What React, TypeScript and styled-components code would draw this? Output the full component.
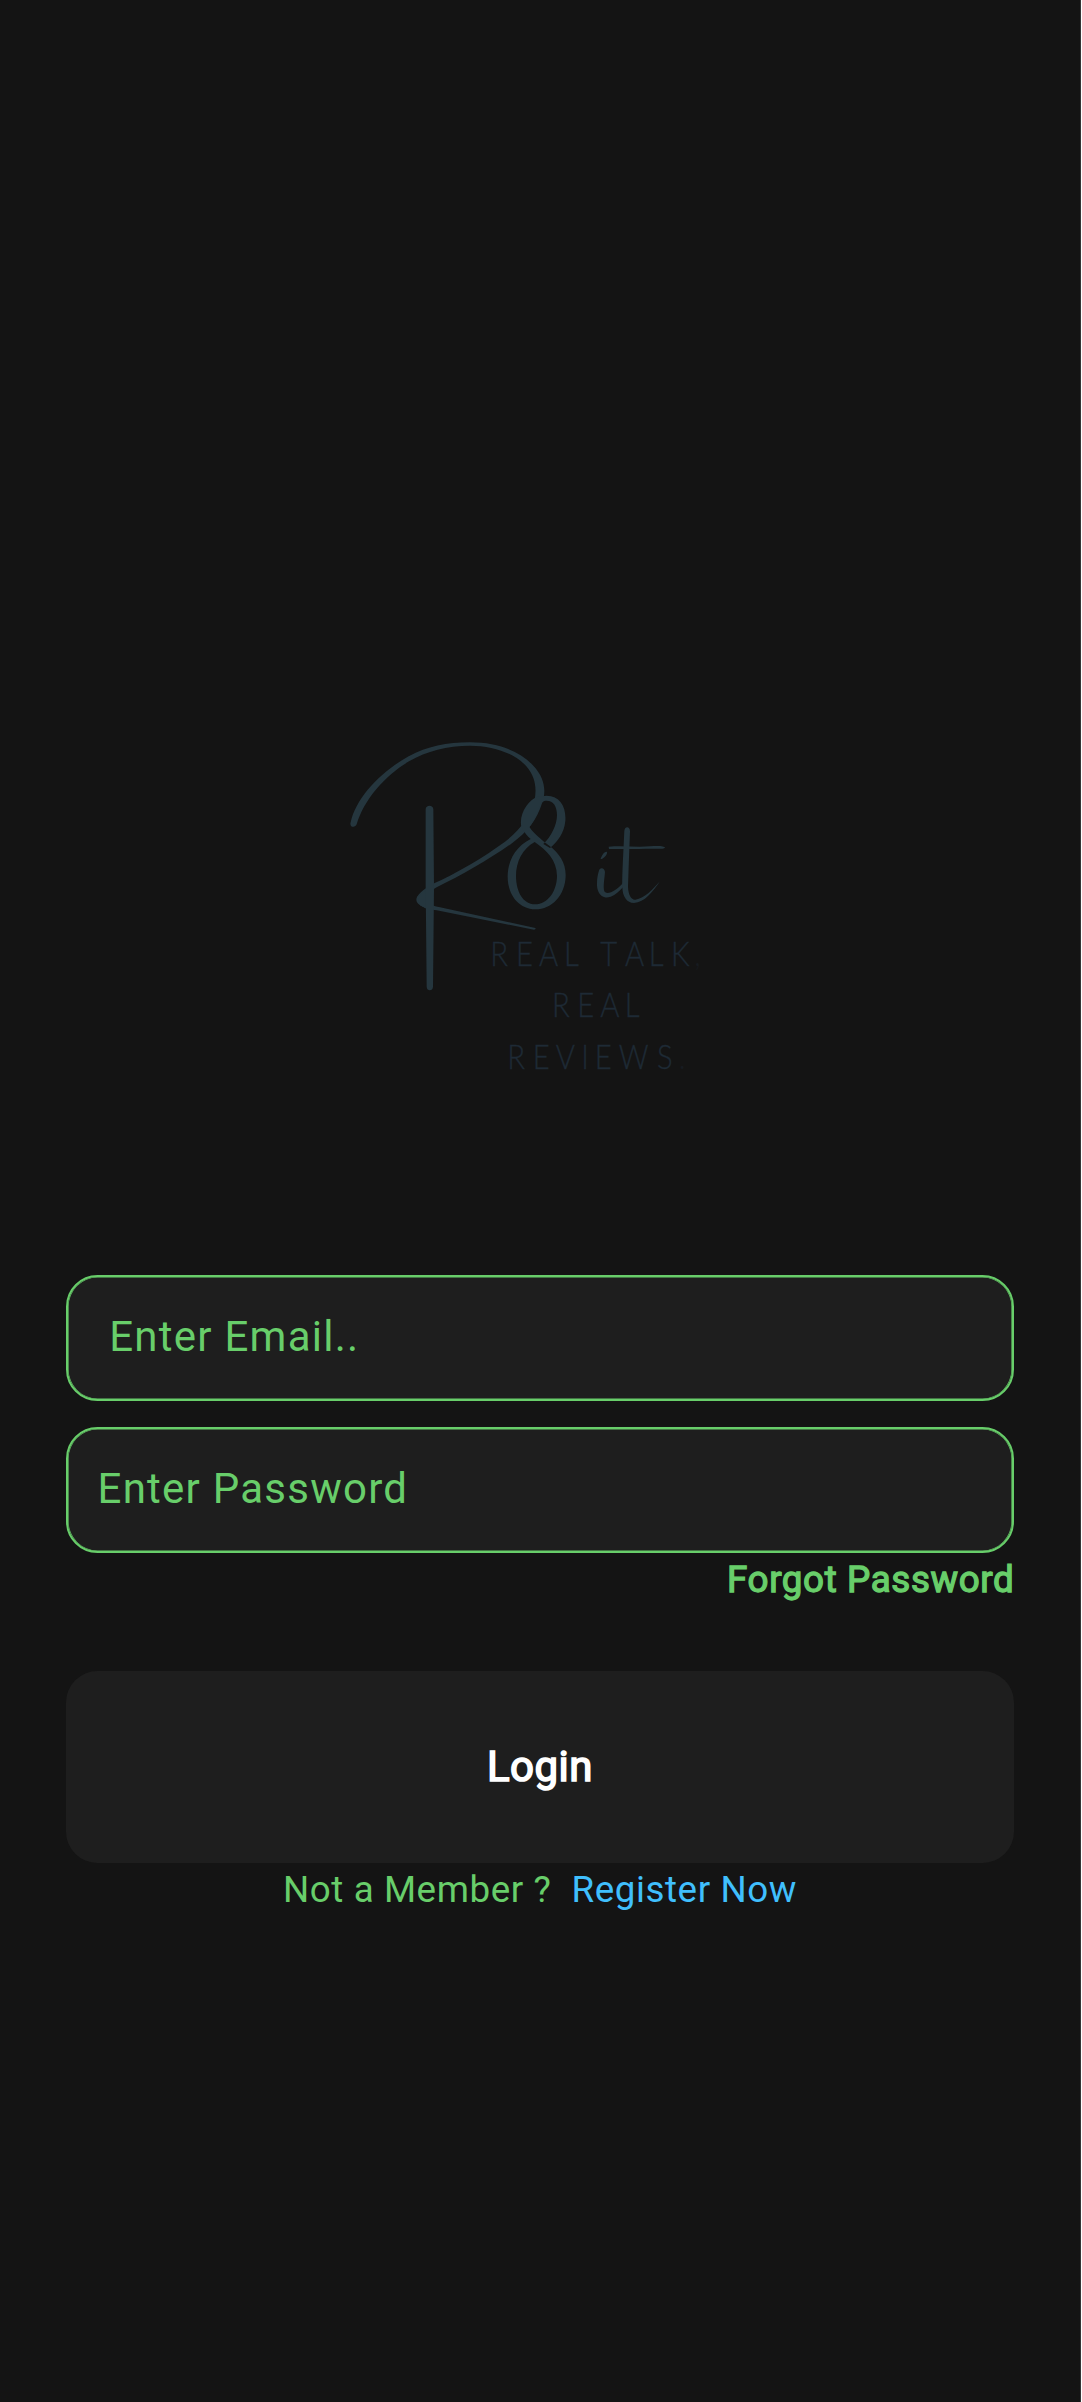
import React from "react";
import styled, { createGlobalStyle } from "styled-components";

const dp = (n: number) => `${n * 2.625}px`;

const colors = {
  page: "#141414",
  surface: "#1e1e1e",
  green: "#68ce6a",
  blue: "#40bffd",
  ink: "#25363e",
  tagline: "#1e2a35",
  faint: "#171b20",
};

const GlobalStyle = createGlobalStyle`
  * { box-sizing: border-box; }
  body { margin: 0; background: #fff; }
`;

const Screen = styled.main`
  display: flex;
  flex-direction: column;
  align-items: stretch;
  width: 1081px;
  height: 2402px;
  padding: 720px ${dp(25)} 0;
  border-right: 1px solid #343536;
  background: ${colors.page};
  font-family: Roboto, "Noto Sans", sans-serif;
  color: ${colors.green};
`;

const Logo = styled.svg`
  display: block;
  flex: none;
  width: 380px;
  height: 370px;
  margin: 0 0 184.5px 264.375px;
`;

const Tagline = styled.text`
  font-family: Lato, sans-serif;
  font-weight: 300;
  font-size: 101px;
  fill: ${colors.tagline};
  stroke: ${colors.tagline};
  stroke-width: 1px;
`;

const Mark = styled.tspan`
  fill: ${colors.faint};
  stroke: none;
`;

const Field = styled.input<{ $indent: number }>`
  display: block;
  flex: none;
  width: 100%;
  height: ${dp(48)};
  margin: 0 0 26.2px;
  padding: 0 28.9px 2px ${(p) => p.$indent}px;
  border: 2px solid ${colors.green};
  border-radius: ${dp(12)};
  outline: none;
  background: ${colors.surface};
  box-shadow: inset 0 0 0 0.6px ${colors.green};
  color: ${colors.green};
  font: 400 ${dp(16)} Roboto, sans-serif;
  letter-spacing: 1.25px;
  &::placeholder {
    color: ${colors.green};
    opacity: 1;
  }
`;

const Forgot = styled.a`
  align-self: flex-end;
  height: 53px;
  margin-top: -26.2px;
  line-height: 53px;
  font-size: ${dp(14)};
  letter-spacing: 0.62px;
  -webkit-text-stroke: 1.3px ${colors.green};
`;

const LoginButton = styled.button`
  flex: none;
  height: 192px;
  margin: 65px 0 0;
  padding: 0;
  border: 0;
  border-radius: ${dp(12)};
  background: ${colors.surface};
  color: #fff;
  font: 400 ${dp(16)} Roboto, sans-serif;
  letter-spacing: 0.5px;
  -webkit-text-stroke: 1.6px #fff;
`;

const SignupRow = styled.p`
  display: flex;
  justify-content: center;
  gap: 20px;
  margin: 0.6px 0 0;
  line-height: 53px;
  font-size: ${dp(14)};
  letter-spacing: 0.58px;
`;

const RegisterLink = styled.a`
  color: ${colors.blue};
`;

const CONDENSE = 0.87;

/* Letters are condensed and each one starts at its own tracked position. */
function TaglineLine({ y, text, mark, at }: { y: number; text: string; mark?: string; at: number[] }) {
  const xs = at.map((x) => (x / CONDENSE).toFixed(1));
  return (
    <Tagline y={y} transform={`scale(${CONDENSE} 1)`} x={xs.join(" ")}>
      {text}
      {mark && <Mark>{mark}</Mark>}
    </Tagline>
  );
}

function LogoMark() {
  return (
    <Logo viewBox="0 0 1140 1110" role="img" aria-label="R8 it">
      <g fill={colors.ink}>
        <path d="M62 307C78 233 152 155 236 109C292 79 350 67 420 67C505 67 570 95 610 137C644 173 650 214 636 250C620 300 595 334 544 371C480 417 395 466 320 502C302 512 291 524 292 539C294 552 309 557 330 562L616 624Q619 629 612 629L320 571C286 567 259 554 259 540C259 526 280 509 306 493C381 459 461 412 525 365C570 331 603 286 614 239C620 205 617 172 589 139C553 99 489 77 420 77C351 77 291 93 237 124C168 164 102 238 80 313C76 325 57 322 62 307Z" />
        <path d="M262 530L296 502L300 572L270 556Z" />
        <path d="M287 268C287 254 310 254 310 268L312 500L309 800C309 814 290 814 290 800L287 500Z" />
        <path
          fillRule="evenodd"
          d="M650 227C690 228 709 260 706 303C703 337 683 366 660 384L640 372C664 350 681 314 681 286C681 258 670 242 650 242C640 242 633 247 629 260C618 290 605 315 598 320C610 340 632 356 656 376C689 401 708 430 707 468C705 525 667 568 616 568C564 567 532 522 533 467C534 420 558 379 602 357C592 348 583 338 574 320C566 280 596 240 622 230ZM614 366C577 386 558 426 558 468C558 514 579 553 615 553C654 553 681 512 681 467C680 420 650 391 614 366Z"
        />
        <path d="M813 413C817 402 824 394 830 395C835 399 825 411 817 416C812 418 811 416 813 413Z" />
        <path d="M836 380C880 377 920 382 960 379C984 377 1004 378 1005 383C1003 388 970 386 946 386C910 388 875 386 837 387Z" />
        <path d="M806 455C808 440 824 442 825 456C823 480 819 500 823 514C832 528 860 510 880 488L882 498C862 522 840 536 824 532C808 528 800 510 801 490C801 476 803 465 806 455Z" />
        <path d="M883 332C885 317 900 319 900 334L896 440L894 500C895 525 904 540 916 539C945 535 968 508 990 484C968 515 944 548 912 549C890 549 878 530 877 502C876 470 880 400 883 332Z" />
      </g>
      <TaglineLine y={737} text="REAL TALK" mark="," at={[481, 558, 627, 702, 760, 811, 885, 956, 1023, 1093]} />
      <TaglineLine y={892} text="REAL" at={[666, 742, 811, 884]} />
      <TaglineLine y={1048} text="REVIEWS" mark="." at={[532, 608, 677, 754, 794, 866, 981, 1046]} />
    </Logo>
  );
}

export default function App() {
  return (
    <>
      <GlobalStyle />
      <Screen>
        <LogoMark />
        <Field type="email" placeholder="Enter Email.." $indent={41.6} />
        <Field type="password" placeholder="Enter Password" $indent={29.9} />
        <Forgot>Forgot Password</Forgot>
        <LoginButton type="button">Login</LoginButton>
        <SignupRow>
          <span>Not a Member ?</span>
          <RegisterLink>Register Now</RegisterLink>
        </SignupRow>
      </Screen>
    </>
  );
}
